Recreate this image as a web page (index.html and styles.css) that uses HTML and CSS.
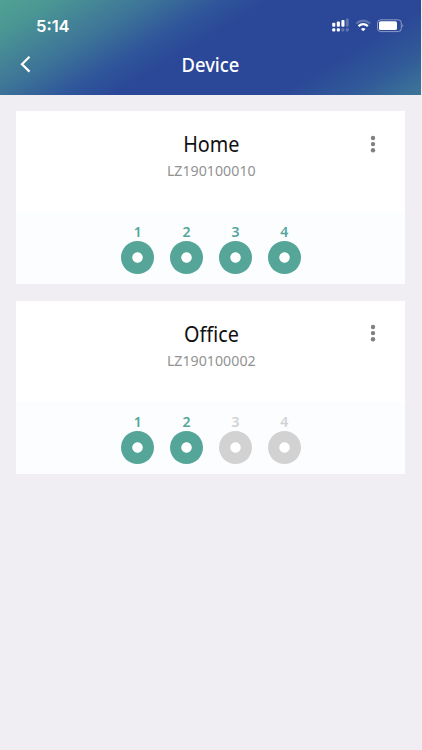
FILE: index.html
```html
<!DOCTYPE html>
<html lang="en">
<head>
<meta charset="utf-8">
<title>Device</title>
<link rel="stylesheet" href="styles.css">
</head>
<body>
<header class="header">
  <div class="status">
    <span class="time">5:14</span>
    <svg class="status-icons" width="74" height="16" viewBox="0 0 74 16" fill="#fff">
      <rect x="1.2" y="4.8" width="3.1" height="4" rx="1"/><rect x="5.8" y="3.5" width="3.1" height="5.3" rx="1"/><rect x="10.4" y="2" width="3.1" height="6.8" rx="1"/>
      <rect x="14.8" y="0.5" width="3" height="8.3" rx="1" opacity=".25"/>
      <rect x="1.2" y="10.2" width="3.1" height="3.2" rx="1"/><rect x="5.8" y="10.2" width="3.1" height="3.2" rx="1"/>
      <rect x="10.4" y="10.2" width="3" height="3.2" rx="1" opacity=".25"/><rect x="14.8" y="10.2" width="3" height="3.2" rx="1" opacity=".25"/>
      <path d="M25.2 5.5Q32.2-.1 39.2 5.500" fill="none" stroke="#fff" stroke-width="2.200" opacity=".25"/>
      <path d="M27.500 8.100Q32.200 4.100 36.900 8.100" fill="none" stroke="#fff" stroke-width="2.200"/>
      <path d="M29.900 11Q32.200 9.200 34.500 11L32.200 13.300Z"/>
      <rect x="46.500" y="1.800" width="23.800" height="11.800" rx="3.200" fill="none" stroke="#fff" stroke-opacity=".45"/>
      <rect x="48" y="3.300" width="18" height="8.800" rx="1.600"/>
      <path d="M71.500 5.800Q73.200 7.700 71.500 9.600Z" opacity=".55"/>
    </svg>
  </div>
  <nav class="nav">
    <svg class="back" width="12" height="18" viewBox="0 0 12 18"><path d="M9.500 1.800L2 9.200L9.500 16.600" fill="none" stroke="#fff" stroke-width="2.200"/></svg>
    <h1 class="heading">Device</h1>
  </nav>
</header>
<main class="list">
  <section class="card">
    <div class="info">
      <h2 class="name">Home</h2>
      <p class="serial">LZ190100010</p>
      <svg class="more" width="6" height="18" viewBox="0 0 6 18" fill="#808080"><circle cx="3" cy="3" r="2.200"/><circle cx="3" cy="9.100" r="2.200"/><circle cx="3" cy="15.200" r="2.200"/></svg>
    </div>
    <div class="channels">
      <div class="channel"><span class="number">1</span><i class="ring"></i></div>
      <div class="channel"><span class="number">2</span><i class="ring"></i></div>
      <div class="channel"><span class="number">3</span><i class="ring"></i></div>
      <div class="channel"><span class="number">4</span><i class="ring"></i></div>
    </div>
  </section>
  <section class="card">
    <div class="info">
      <h2 class="name">Office</h2>
      <p class="serial">LZ190100002</p>
      <svg class="more" width="6" height="18" viewBox="0 0 6 18" fill="#808080"><circle cx="3" cy="3" r="2.200"/><circle cx="3" cy="9.100" r="2.200"/><circle cx="3" cy="15.200" r="2.200"/></svg>
    </div>
    <div class="channels">
      <div class="channel"><span class="number">1</span><i class="ring"></i></div>
      <div class="channel"><span class="number">2</span><i class="ring"></i></div>
      <div class="channel off"><span class="number">3</span><i class="ring"></i></div>
      <div class="channel off"><span class="number">4</span><i class="ring"></i></div>
    </div>
  </section>
</main>
</body>
</html>
```
FILE: styles.css
```css
* { box-sizing: border-box; margin: 0; padding: 0; }
body {
  min-height: 750px;
  background: #f0eef3;
  font-family: "Noto Sans", "Open Sans", sans-serif;
}
.header {
  width: 421px;
  height: 95px;
  padding-top: 11px;
  background: linear-gradient(149deg, #4fa293 0%, #4b9794 9%, #3c7298 27%, #2f569a 38%, #2b4797 47%, #2b4797 75%, #315b99 88%, #3d7799 100%);
}
.status {
  display: flex;
  align-items: center;
  justify-content: space-between;
  height: 30px;
  padding: 0 16px 0 36px;
}
.time {
  font: 600 16.500px/20px Inter, sans-serif;
  color: #fff;
}
.status-icons { display: block; }
.nav {
  position: relative;
  display: flex;
  justify-content: center;
  height: 48px;
}
.back { position: absolute; left: 20px; top: 14px; }
.heading {
  font-size: 20px;
  font-weight: 500;
  line-height: 48px;
  color: #fff;
  transform: scaleX(.92);
}
.list {
  display: flex;
  flex-direction: column;
  gap: 16.500px;
  padding: 16px 17px 0 16px;
}
.card { height: 173px; background: #fff; }
.info {
  position: relative;
  display: flex;
  flex-direction: column;
  align-items: center;
  height: 101px;
  padding: 17px 0 0 1px;
}
.name {
  font-size: 22px;
  font-weight: 400;
  line-height: 30px;
  color: #111;
  transform: scaleX(.9);
}
.serial {
  margin-top: 1px;
  font-size: 14.500px;
  line-height: 22px;
  color: #929292;
  transform: scaleX(.98);
}
.more { position: absolute; right: 29.500px; top: 23.500px; }
.channels {
  display: flex;
  justify-content: center;
  gap: 15.800px;
  height: 72px;
  padding: 12px 0 0 1px;
  background: #fbfdff;
}
.channel {
  display: flex;
  flex-direction: column;
  align-items: center;
  color: #55a698;
}
.channel.off { color: #d2d2d2; }
.number { height: 17.400px; font-size: 14px; font-weight: 600; line-height: 16px; }
.ring {
  width: 33px;
  height: 33px;
  border-radius: 50%;
  background: radial-gradient(circle, #fff 4.800px, currentColor 5.600px);
}
```
